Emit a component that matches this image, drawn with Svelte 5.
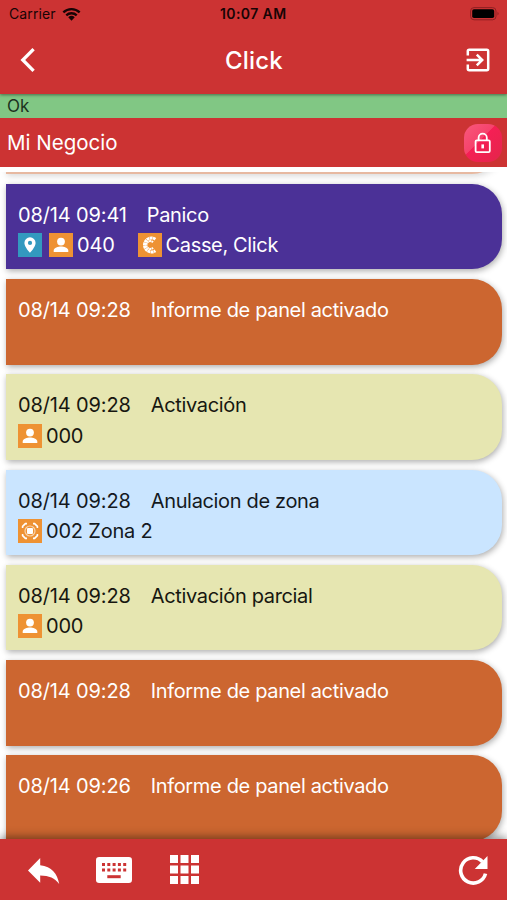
<script>
    const events = [
        { kind: 'report', time: '', title: '', tags: [] },
        { kind: 'panic', time: '08/14 09:41', title: 'Panico', tags: [
            { icon: 'pin', text: '' },
            { icon: 'user', text: '040' },
            { icon: 'brand', text: 'Casse, Click' }
        ] },
        { kind: 'report', time: '08/14 09:28', title: 'Informe de panel activado', tags: [] },
        { kind: 'armed', time: '08/14 09:28', title: 'Activación', tags: [{ icon: 'user', text: '000' }] },
        { kind: 'bypass', time: '08/14 09:28', title: 'Anulacion de zona', tags: [{ icon: 'zone', text: '002 Zona 2' }] },
        { kind: 'armed', time: '08/14 09:28', title: 'Activación parcial', tags: [{ icon: 'user', text: '000' }] },
        { kind: 'report', time: '08/14 09:28', title: 'Informe de panel activado', tags: [] },
        { kind: 'report', time: '08/14 09:26', title: 'Informe de panel activado', tags: [] }
    ]
</script>

<div class="app">
    <header>
        <div class="status">
            <span class="carrier">Carrier</span>
            <svg class="wifi" viewBox="0 0 20 14">
                <path d="M1.4 5.3a12.4 12.4 0 0 1 17.2 0M4.5 8.4a8 8 0 0 1 11 0" fill="none" stroke="#170405" stroke-width="2.4" />
                <path d="M6.6 10.4a5 5 0 0 1 6.8 0L10 14z" fill="#170405" />
            </svg>
            <span class="clock">10:07 AM</span>
            <svg class="battery" viewBox="0 0 30 14">
                <rect x=".6" y=".6" width="25.4" height="12.2" rx="3.4" fill="none" stroke="#8f2023" />
                <rect x="2.2" y="2.3" width="22" height="8.8" rx="1.8" />
                <path d="M27.5 4.8q2.3 1.9 0 3.8z" fill="#8f2023" />
            </svg>
        </div>
        <div class="nav">
            <svg class="back" viewBox="0 0 16 26"><path d="M13.6 2.2L2.8 13l10.8 10.8" fill="none" stroke="#fff" stroke-width="3.3" /></svg>
            <h1>Click</h1>
            <svg class="exit" viewBox="0 0 24 24">
                <path d="M1.8 7.5V3.2q0-1.4 1.4-1.4h17.6q1.4 0 1.4 1.4v17.6q0 1.4-1.4 1.4H3.2q-1.4 0-1.4-1.4v-4.3M.6 12h15.4M10.8 6.7l5.4 5.3-5.4 5.3" fill="none" stroke="#fff" stroke-width="2.5" />
            </svg>
        </div>
    </header>

    <div class="state">Ok</div>

    <div class="place">
        <span>Mi Negocio</span>
        <div class="lock">
            <svg viewBox="0 0 18 22">
                <rect x="1.6" y="8.4" width="14.2" height="11.7" rx="1.2" fill="none" stroke="#fff" stroke-width="1.8" />
                <path d="M4.6 8.4V5.8a4.1 4.1 0 0 1 8.2 0v2.6" fill="none" stroke="#fff" stroke-width="1.8" />
                <path d="M7.4 12.4h2.6v4H7.4z" fill="#fff" />
            </svg>
        </div>
    </div>

    <main>
        {#each events as event}
            <article class={event.kind}>
                <div class="line">
                    <span class="time">{event.time}</span>
                    <span class="title">{event.title}</span>
                </div>
                <div class="tags">
                    {#each event.tags as tag}
                        <div class="tag {tag.icon}">
                            <svg viewBox="0 0 24 24">
                                {#if tag.icon == 'pin'}
                                    <path fill-rule="evenodd" d="M12 4.3a5.6 5.6 0 0 0-5.6 5.6c0 4 5.6 9.8 5.6 9.8s5.6-5.8 5.6-9.8A5.6 5.6 0 0 0 12 4.3zm0 3.5a2.1 2.1 0 1 1 0 4.2 2.1 2.1 0 0 1 0-4.2z" />
                                {:else if tag.icon == 'user'}
                                    <circle cx="12" cy="8.6" r="3.9" />
                                    <path d="M4.7 19v-1.6c0-2.7 4.6-4 7.3-4s7.3 1.3 7.3 4V19z" />
                                {:else if tag.icon == 'brand'}
                                    <path d="M17.4 6.2a7 7 0 1 0 0 11.6" fill="none" stroke="#fff" stroke-width="3" stroke-dasharray="2.7 .4" />
                                    <path d="M15 9.2a3.9 3.9 0 1 0 0 5.6" fill="none" stroke="#fff" stroke-width="2" stroke-dasharray="1.9 .4" />
                                {:else}
                                    <path d="M4.6 9V7.4l2.8-2.8H9M15 4.6h1.6l2.8 2.8V9M19.4 15v1.6l-2.8 2.8H15M9 19.4H7.4l-2.8-2.8V15" fill="none" stroke="#fff" stroke-width="1.6" />
                                    <circle cx="12" cy="12" r="5" fill="none" stroke="#fff" stroke-width="1.2" opacity=".6" />
                                    <rect x="9" y="9" width="6" height="6" rx="1" />
                                {/if}
                            </svg>
                            {#if tag.text}<span>{tag.text}</span>{/if}
                        </div>
                    {/each}
                </div>
            </article>
        {/each}
    </main>

    <footer>
        <svg class="reply" viewBox="0 0 32 26"><path d="M12.2 0v7.2C23.8 8.5 29.2 15.5 31.2 26 27 20.2 21 17.8 12.2 17.6v7.2L0 12.4z" /></svg>
        <svg class="keyboard" viewBox="0 0 36 26">
            <rect width="36" height="26" rx="3.2" />
            <g class="keys">
                {#each [0, 1, 2, 3, 4] as col}
                    <rect x={6 + col * 5.3} y="6" width="3" height="3" />
                    <rect x={6 + col * 5.3} y="11.5" width="3" height="3" />
                {/each}
                <rect x="11.3" y="18.2" width="13.4" height="3" />
            </g>
        </svg>
        <svg class="grid" viewBox="0 0 29 29">
            {#each [0, 10.5, 21] as y}
                {#each [0, 10.5, 21] as x}
                    <rect {x} {y} width="8" height="8" />
                {/each}
            {/each}
        </svg>
        <svg class="refresh" viewBox="0 0 24 24">
            <path d="M19.6 5.4A10.1 10.1 0 1 0 22 14.9" fill="none" stroke="#fff" stroke-width="2.9" />
            <path d="M23.6.8v10.3H13.4z" />
        </svg>
    </footer>
</div>

<style>
    :global(body) {
        background: #fff;
    }
    .app {
        display: flex;
        flex-direction: column;
        width: 507px;
        height: 900px;
        overflow: hidden;
        font-family: Inter, "Liberation Sans", sans-serif;
        color: #fff;
    }
    svg {
        display: block;
        flex: none;
        fill: #fff;
    }
    header {
        height: 94px;
        background: #cc3333;
        box-shadow: 0 1px 3px rgba(0, 0, 0, .45);
        z-index: 1;
    }
    .status {
        display: grid;
        grid-template-columns: 47px 143px 1fr 30px;
        align-items: center;
        height: 27px;
        padding: 0 7px 0 9px;
        color: #170405;
        font-size: 14px;
    }
    .carrier {
        letter-spacing: .1px;
    }
    .wifi {
        width: 19px;
        height: 14px;
        margin-left: 6px;
    }
    .clock {
        padding-left: 21px;
        font-size: 14px;
        font-weight: 600;
        letter-spacing: .4px;
    }
    .battery {
        width: 30px;
        height: 14px;
        fill: #000;
    }
    .nav {
        display: flex;
        align-items: center;
        justify-content: space-between;
        height: 66px;
        padding: 0 17px 0 20px;
    }
    .back {
        width: 16px;
        height: 26px;
    }
    h1 {
        margin: 2px 0 0 6px;
        font-size: 24px;
        font-weight: 500;
        line-height: 30px;
        letter-spacing: .2px;
    }
    .exit {
        width: 24px;
        height: 24px;
    }
    .state {
        height: 24px;
        padding-left: 7px;
        background: #81c784;
        color: #1c3320;
        font-size: 17px;
        line-height: 24px;
    }
    .place {
        display: flex;
        align-items: center;
        justify-content: space-between;
        height: 49px;
        padding: 0 5px 0 7px;
        background: #cc3333;
        font-size: 20.5px;
    }
    .lock {
        display: flex;
        align-items: center;
        justify-content: center;
        width: 38px;
        height: 38px;
        border-radius: 14px;
        background: linear-gradient(135deg, #f8597c, #f6426c 42%, #f51f55 43%, #e3264a);
    }
    .lock svg {
        width: 18px;
        height: 22px;
    }
    main {
        flex: 1;
        min-height: 0;
        margin-top: 5px;
        overflow: hidden;
    }
    article {
        box-sizing: border-box;
        height: 85.6px;
        margin: 0 5px 9.7px 6px;
        padding: 16px 12px 0;
        border-radius: 0 30px 30px 0;
        box-shadow: 1px 2px 6px rgba(0, 0, 0, .33);
        font-size: 20px;
    }
    article:first-child {
        margin-top: -83.6px;
        opacity: .45;
    }
    .panic {
        background: #4b3197;
    }
    .report {
        background: #cc6630;
    }
    .armed {
        background: #e6e6b1;
        color: #171710;
    }
    .bypass {
        background: #cae5ff;
        color: #14191e;
    }
    .line {
        display: flex;
        gap: 20px;
        height: 30px;
        line-height: 31px;
    }
    .time {
        letter-spacing: -.14px;
    }
    .title {
        letter-spacing: -.34px;
    }
    .tags {
        display: flex;
        align-items: center;
        height: 31px;
    }
    .tag {
        display: flex;
        align-items: center;
        gap: 4px;
        letter-spacing: -.2px;
    }
    .tag svg {
        width: 24px;
        height: 24px;
        background: #ee9233;
    }
    .pin {
        margin-right: 7px;
    }
    .pin svg {
        background: #3399bf;
    }
    .brand {
        margin-left: 23px;
        letter-spacing: -.35px;
    }
    footer {
        display: flex;
        align-items: center;
        box-sizing: border-box;
        height: 61px;
        padding: 0 19px 0 28px;
        background: #cc3333;
        box-shadow: 0 -2px 9px rgba(0, 0, 0, .45);
        z-index: 1;
    }
    .reply {
        width: 32px;
        height: 26px;
        margin-top: 2px;
    }
    .keyboard {
        width: 36px;
        height: 26px;
        margin-left: 36px;
    }
    .keys {
        fill: #cc3333;
    }
    .grid {
        width: 29px;
        height: 29px;
        margin-left: 38px;
    }
    .refresh {
        width: 30px;
        height: 30px;
        margin-left: auto;
    }
</style>
